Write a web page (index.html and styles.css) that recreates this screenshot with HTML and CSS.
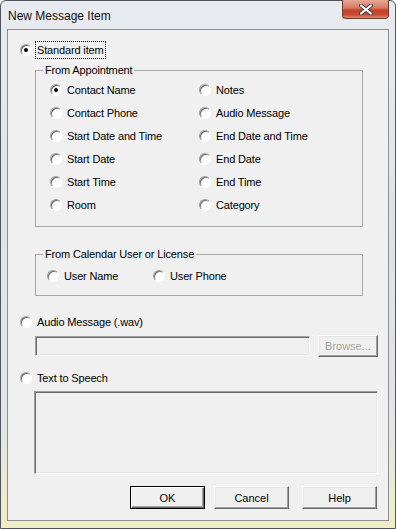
FILE: index.html
```html
<!DOCTYPE html>
<html lang="en">
<head>
  <meta charset="UTF-8" />
  <title>New Message Item</title>
  <link rel="stylesheet" href="styles.css">
</head>
<body>
  <div class="window">
    <div class="titlebar">
      <span class="title">New Message Item</span>
      <span class="close-btn">
        <svg width="14" height="11" viewBox="0 0 14 11">
          <path d="M2 1.5 L12 9.5 M12 1.5 L2 9.5" stroke="#3a3f55" stroke-width="4" stroke-linecap="round" />
          <path d="M2 1.5 L12 9.5 M12 1.5 L2 9.5" stroke="#ffffff" stroke-width="2.2" stroke-linecap="round" />
        </svg>
      </span>
    </div>

    <div class="client">
      <div class="option main first">
        <span class="rb checked"></span>
        <span class="label focused">Standard item</span>
      </div>

      <fieldset class="group appt">
        <legend>From Appointment</legend>
        <div class="appt-grid">
          <div class="option"><span class="rb checked"></span><span class="label">Contact Name</span></div>
          <div class="option"><span class="rb"></span><span class="label">Notes</span></div>
          <div class="option"><span class="rb"></span><span class="label">Contact Phone</span></div>
          <div class="option"><span class="rb"></span><span class="label">Audio Message</span></div>
          <div class="option"><span class="rb"></span><span class="label">Start Date and Time</span></div>
          <div class="option"><span class="rb"></span><span class="label">End Date and Time</span></div>
          <div class="option"><span class="rb"></span><span class="label">Start Date</span></div>
          <div class="option"><span class="rb"></span><span class="label">End Date</span></div>
          <div class="option"><span class="rb"></span><span class="label">Start Time</span></div>
          <div class="option"><span class="rb"></span><span class="label">End Time</span></div>
          <div class="option"><span class="rb"></span><span class="label">Room</span></div>
          <div class="option"><span class="rb"></span><span class="label">Category</span></div>
        </div>
      </fieldset>

      <fieldset class="group user">
        <legend>From Calendar User or License</legend>
        <div class="user-row">
          <div class="option user-name"><span class="rb"></span><span class="label">User Name</span></div>
          <div class="option"><span class="rb"></span><span class="label">User Phone</span></div>
        </div>
      </fieldset>

      <div class="option main audio">
        <span class="rb"></span>
        <span class="label">Audio Message (.wav)</span>
      </div>
      <div class="file-row">
        <div class="field"></div>
        <button class="btn browse" disabled>Browse...</button>
      </div>

      <div class="option main tts">
        <span class="rb"></span>
        <span class="label">Text to Speech</span>
      </div>
      <div class="textbox"></div>

      <div class="buttons">
        <button class="btn default">OK</button>
        <button class="btn cancel">Cancel</button>
        <button class="btn help">Help</button>
      </div>
    </div>
  </div>
</body>
</html>
```

FILE: styles.css
```css
* {
  box-sizing: border-box;
}

body {
  margin: 0;
  width: 396px;
  height: 529px;
  font-family: "Liberation Sans", Arial, sans-serif;
  font-size: 11px;
  letter-spacing: -0.15px;
  color: #000;
  background: #ffffff;
}

.window {
  width: 396px;
  height: 529px;
  border: 1px solid #50555c;
  border-radius: 6px 6px 0 0;
  padding: 0 6px 7px;
  background: linear-gradient(to bottom, #e8ebef 0%, #dfe3e8 40%, #e2e4e6 80%, #f0eec4 100%);
}

.titlebar {
  height: 28px;
  display: flex;
  justify-content: space-between;
  align-items: flex-start;
}

.title {
  font-size: 12px;
  letter-spacing: 0;
  line-height: 14px;
  padding-top: 8px;
  padding-left: 1px;
  color: #111;
}

.close-btn {
  width: 47px;
  height: 19px;
  margin-top: -1px;
  border: 1px solid #6b3a33;
  border-top: none;
  border-radius: 0 0 4px 4px;
  background: linear-gradient(to bottom, #e9a797 0%, #d9775f 45%, #c44329 55%, #c9482e 80%, #e0866a 100%);
  display: flex;
  align-items: center;
  justify-content: center;
}

.client {
  height: 492px;
  border: 1px solid #8d8f91;
  background: #f0f0f0;
}

/* radio buttons */

.option {
  display: flex;
  align-items: center;
  white-space: nowrap;
}

.rb {
  width: 12px;
  height: 12px;
  flex: none;
  border-radius: 50%;
  border: 1px solid;
  border-color: #9c9c9c #ffffff #ffffff #9c9c9c;
  background: #ffffff;
  box-shadow: inset 1px 1px 0 #6a6a6a;
  display: flex;
  align-items: center;
  justify-content: center;
}

.rb.checked::after {
  content: "";
  width: 4px;
  height: 4px;
  border-radius: 50%;
  background: #000;
}

.label {
  margin-left: 5px;
  line-height: 16px;
}

.option.main {
  height: 16px;
  margin-left: 12px;
}

.option.main .label {
  margin-left: 4px;
  padding: 0 1px;
}

.option.first {
  margin-top: 12px;
}

.label.focused {
  outline: 1px dotted #000;
  outline-offset: 0;
}

/* group boxes */

.group {
  margin: 0 0 0 27px;
  padding: 0;
  width: 328px;
  border: 1px solid #a8a8a8;
  border-radius: 0;
}

.group legend {
  margin-left: 7px;
  padding: 0 2px;
  line-height: 14px;
}

.appt {
  margin-top: 5px;
}

.appt-grid {
  display: grid;
  grid-template-columns: 149px 1fr;
  grid-auto-rows: 23px;
  padding: 1px 0 10px 14px;
}

.user {
  margin-top: 20px;
}

.user-row {
  display: flex;
  height: 16px;
  padding-left: 11px;
  margin: 7px 0 11px;
}

.user-name {
  width: 106px;
}

.option.audio {
  margin-top: 18px;
}

/* sunken fields */

.file-row {
  display: flex;
  align-items: center;
  height: 22px;
  margin: 5px 0 0 27px;
}

.field {
  width: 275px;
  height: 20px;
  background: #f0f0f0;
  border: 1px solid;
  border-color: #a0a0a0 #ffffff #ffffff #a0a0a0;
  box-shadow: inset 1px 1px 0 #6d6d6d, inset -1px -1px 0 #e3e3e3;
}

.option.tts {
  margin-top: 13px;
}

.textbox {
  width: 344px;
  height: 83px;
  margin: 5px 0 0 26px;
  background: #f0f0f0;
  border: 1px solid;
  border-color: #a0a0a0 #ffffff #ffffff #a0a0a0;
  box-shadow: inset 1px 1px 0 #6d6d6d, inset -1px -1px 0 #e3e3e3;
}

/* push buttons */

.btn {
  height: 23px;
  width: 75px;
  padding: 0;
  font-family: "Liberation Sans", Arial, sans-serif;
  font-size: 11px;
  color: #000;
  background: #f0f0f0;
  border: 1px solid;
  border-color: #ffffff #696969 #696969 #ffffff;
  box-shadow: inset -1px -1px 0 #a0a0a0, inset 1px 1px 0 #e3e3e3;
  border-radius: 0;
}

.btn.browse {
  width: 60px;
  height: 22px;
  margin-left: 8px;
  color: #a0a0a0;
  text-shadow: 1px 1px 0 #ffffff;
}

.btn.default {
  border: 1px solid #000;
  box-shadow: inset 1px 1px 0 #ffffff, inset -1px -1px 0 #696969, inset -2px -2px 0 #a0a0a0;
}

.buttons {
  display: flex;
  margin: 12px 0 0 122px;
}

.btn.cancel {
  margin-left: 9px;
}

.btn.help {
  margin-left: 13px;
}
```
